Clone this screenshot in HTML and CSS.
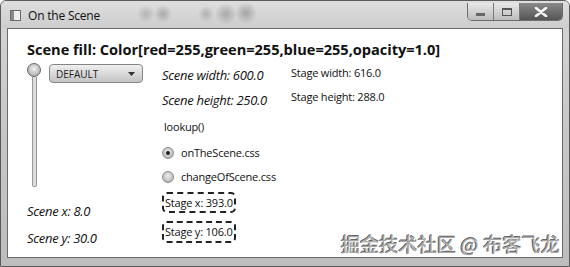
FILE: index.html
```html
<!DOCTYPE html>
<html lang="en">
<head>
    <meta charset="UTF-8">
    <title>On the Scene</title>
    <link rel="stylesheet" href="styles.css">
</head>
<body>
    <div class="window">
        <div class="titlebar">
            <span class="app-icon"></span>
            <span class="title">On the Scene</span>
            <div class="caption-buttons">
                <span class="cap-btn cap-min"><i></i></span>
                <span class="cap-btn cap-max"><i></i></span>
                <span class="cap-btn cap-close">
                    <svg width="14" height="10" viewBox="0 0 14 10"><path d="M2 1 L12 9 M12 1 L2 9" stroke="#f4f4f4" stroke-width="2.6" stroke-linecap="round"/></svg>
                </span>
            </div>
        </div>
        <div class="client">
            <h1 class="fill-label">Scene fill: Color[red=255,green=255,blue=255,opacity=1.0]</h1>
            <div class="layout">
                <div class="col-left">
                    <div class="controls">
                        <div class="slider"><span class="thumb"></span><span class="track"></span></div>
                        <div class="combo">
                            <span>DEFAULT</span>
                            <svg width="7" height="4" viewBox="0 0 7 4"><path d="M0 0 H7 L3.5 4 Z" fill="#333"/></svg>
                        </div>
                    </div>
                    <p class="scene-text pos-x">Scene x: 8.0</p>
                    <p class="scene-text pos-y">Scene y: 30.0</p>
                </div>
                <div class="col-mid">
                    <p class="scene-text row">Scene width: 600.0</p>
                    <p class="scene-text row">Scene height: 250.0</p>
                    <p class="plain row lookup">lookup()</p>
                    <label class="plain row radio"><span class="dot selected"></span>onTheScene.css</label>
                    <label class="plain row radio radio-2"><span class="dot"></span>changeOfScene.css</label>
                    <div class="stage-box box-x">Stage x: 393.0</div>
                    <div class="stage-box box-y">Stage y: 106.0</div>
                </div>
                <div class="col-right">
                    <p class="plain stage-row">Stage width: 616.0</p>
                    <p class="plain stage-row">Stage height: 288.0</p>
                </div>
            </div>
        </div>
        <div class="watermark">掘金技术社区 @ 布客飞龙</div>
    </div>
</body>
</html>
```

FILE: styles.css
```css
body { margin: 0; background: #fff; font-family: "Open Sans", "Noto Sans", sans-serif; }
p { margin: 0; }
.window { position: relative; width: 570px; height: 267px; box-sizing: border-box; border: 1px solid #5a5a5a; border-radius: 6px 6px 0 0; background: linear-gradient(180deg, #d6d6d6 0%, #c9c9c9 40%, #bdbdbd 100%); overflow: hidden; }
.titlebar { position: relative; height: 27px; display: flex; align-items: center; padding-left: 9px; background: radial-gradient(circle at 145px 13px, #b4b4b4 0, transparent 9px), radial-gradient(circle at 162px 13px, #aaa 0, transparent 9px), radial-gradient(circle at 225px 13px, #a8a8a8 0, transparent 11px), radial-gradient(circle at 245px 12px, #a4a4a4 0, transparent 11px), radial-gradient(circle at 205px 13px, #b0b0b0 0, transparent 8px), linear-gradient(180deg, #dedede, #cdcdcd); }
.app-icon { width: 9px; height: 9px; border: 1px solid #6a6a6a; background: linear-gradient(90deg, #8a8a8a 0 3px, #eee 3px); margin-top: 2px; }
.title { margin-left: 7px; margin-top: 2px; font-size: 12px; color: #111; font-family: "Open Sans", sans-serif; letter-spacing: -0.2px; }
.caption-buttons { position: absolute; top: 2px; right: 6px; display: flex; height: 17px; border: 1px solid #6e6e6e; border-top: none; border-radius: 0 0 5px 5px; overflow: hidden; }
.cap-btn { display: flex; align-items: center; justify-content: center; width: 25px; background: linear-gradient(180deg, #e8e8e8, #bcbcbc); border-right: 1px solid #7a7a7a; }
.cap-btn i { display: block; }
.cap-min i { width: 9px; height: 3px; background: #666; margin-top: 5px; }
.cap-max i { width: 8px; height: 5px; border: 1px solid #555; border-top-width: 2px; }
.cap-close { width: 42px; border-right: none; background: linear-gradient(180deg, #8a8a8a, #555); }
.client { position: relative; margin: 0 6px; height: 230px; box-sizing: border-box; border: 1px solid #6a6a6a; background: #fff; padding: 11px 0 0 19px; color: #111; }
.fill-label { margin: 0; font-size: 14.6px; line-height: 18px; font-weight: 700; letter-spacing: -0.03px; }
.layout { display: flex; margin-top: 5px; }
.col-left { width: 135px; display: flex; flex-direction: column; }
.controls { display: flex; align-items: flex-start; }
.slider { width: 14px; height: 124px; display: flex; flex-direction: column; align-items: center; }
.thumb { width: 12px; height: 12px; border-radius: 50%; border: 1px solid #666; background: radial-gradient(circle at 50% 40%, #f2f2f2, #9a9a9a); }
.track { width: 3px; flex: 1; border: 1px solid #9a9a9a; border-top: none; border-radius: 0 0 2px 2px; background: #dcdcdc; }
.combo { margin-left: 8px; margin-top: 1px; width: 94px; height: 19px; box-sizing: border-box; border: 1px solid #858585; border-radius: 4px; background: linear-gradient(180deg, #efefef, #c4c4c4); display: flex; align-items: center; justify-content: space-between; padding: 0 7px 0 6px; font-size: 10px; color: #222; }
.scene-text { font-style: italic; font-size: 13px; line-height: 25px; letter-spacing: -0.3px; }
.pos-x { margin-top: 12px; height: 25px; }
.pos-y { margin-top: 2px; height: 25px; }
.col-mid { width: 129px; display: flex; flex-direction: column; }
.plain { font-size: 11px; letter-spacing: -0.2px; }
.row { height: 25px; display: flex; align-items: center; }
.lookup { height: 27px; padding-left: 2px; }
.radio-2 { height: 23px; }
.dot { width: 10px; height: 10px; border-radius: 50%; border: 1px solid #8a8a8a; background: radial-gradient(circle at 50% 40%, #eee, #a6a6a6); margin-right: 7px; position: relative; }
.dot.selected::after { content: ""; position: absolute; left: 3px; top: 3px; width: 4px; height: 4px; border-radius: 50%; background: #222; }
.stage-box { width: 74px; box-sizing: border-box; border: 2px dashed #222; border-radius: 5px; font-size: 11px; line-height: 17px; padding-left: 1px; letter-spacing: -0.2px; }
.box-x { margin-top: 4px; height: 21px; }
.box-y { margin-top: 8px; height: 22px; line-height: 18px; }
.col-right { display: flex; flex-direction: column; gap: 4px; }
.stage-row { line-height: 20px; }
.watermark { position: absolute; right: 9px; bottom: 11px; font-family: "Noto Sans CJK SC", sans-serif; font-size: 19px; line-height: 22px; color: #a8a8a8; text-shadow: 1px 1px 0 #fff, -1px 0 0 #555, 0 -1px 0 #666; letter-spacing: 0.2px; }
```
